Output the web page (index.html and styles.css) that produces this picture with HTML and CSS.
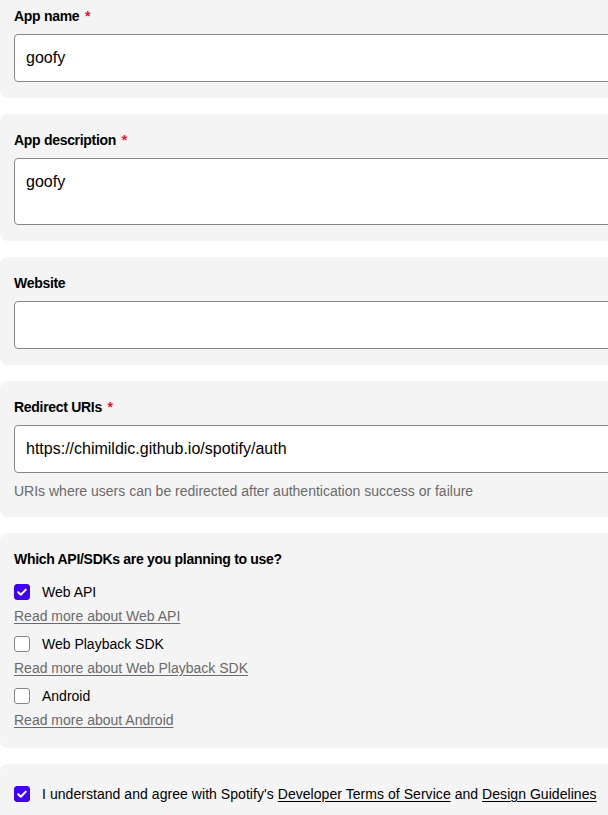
FILE: index.html
```html
<!DOCTYPE html>
<html lang="en">
<head>
<meta charset="utf-8">
<title>Create app</title>
<link rel="stylesheet" href="styles.css">
</head>
<body>
<div class="page">
  <form class="form">
    <div class="card">
      <label class="label">App name <span class="req">*</span></label>
      <div class="input">goofy</div>
    </div>
    <div class="card">
      <label class="label">App description <span class="req">*</span></label>
      <div class="input textarea">goofy</div>
    </div>
    <div class="card">
      <label class="label">Website</label>
      <div class="input"></div>
    </div>
    <div class="card">
      <label class="label">Redirect URIs <span class="req">*</span></label>
      <div class="input">https://chimildic.github.io/spotify/auth</div>
      <p class="help">URIs where users can be redirected after authentication success or failure</p>
    </div>
    <div class="card">
      <label class="label">Which API/SDKs are you planning to use?</label>
      <div class="options">
        <div class="option">
          <div class="check-row">
            <span class="box checked"><svg viewBox="0 0 16 16" width="16" height="16"><polyline points="4.2,8.3 6.8,10.8 11.8,5.6" fill="none" stroke="#fff" stroke-width="2" stroke-linecap="round" stroke-linejoin="round"/></svg></span>
            <span>Web API</span>
          </div>
          <a class="more" href="#">Read more about Web API</a>
        </div>
        <div class="option">
          <div class="check-row">
            <span class="box"></span>
            <span>Web Playback SDK</span>
          </div>
          <a class="more" href="#">Read more about Web Playback SDK</a>
        </div>
        <div class="option">
          <div class="check-row">
            <span class="box"></span>
            <span>Android</span>
          </div>
          <a class="more" href="#">Read more about Android</a>
        </div>
      </div>
    </div>
    <div class="card agree-card">
      <div class="check-row">
        <span class="box checked"><svg viewBox="0 0 16 16" width="16" height="16"><polyline points="4.2,8.3 6.8,10.8 11.8,5.6" fill="none" stroke="#fff" stroke-width="2" stroke-linecap="round" stroke-linejoin="round"/></svg></span>
        <span class="agree-text">I understand and agree with Spotify's <a href="#">Developer Terms of Service</a> and <a href="#">Design Guidelines</a></span>
      </div>
    </div>
  </form>
</div>
</body>
</html>
```

FILE: styles.css
```css
html, body {
  margin: 0;
  padding: 0;
  background: #ffffff;
  overflow: hidden;
}
body {
  font-family: "Liberation Sans", Arial, sans-serif;
  color: #000000;
  font-size: 14px;
}
.page {
  width: 760px;
  margin-top: -10px;
}
.form {
  display: flex;
  flex-direction: column;
  gap: 16px;
}
.card {
  background: #f4f4f4;
  border-radius: 8px;
  padding: 16px 14px;
  display: flex;
  flex-direction: column;
}
.label {
  font-weight: bold;
  font-size: 14px;
  line-height: 20px;
  margin-bottom: 8px;
  letter-spacing: -0.3px;
}
.req {
  color: #e91429;
  margin-left: 2px;
}
.input {
  box-sizing: border-box;
  height: 48px;
  background: #ffffff;
  border: 1px solid #878787;
  border-radius: 4px;
  padding: 0 11px;
  font-size: 16px;
  line-height: 46px;
}
.textarea {
  height: 67px;
  line-height: 20px;
  padding-top: 13px;
}
.help {
  margin: 8px 0 0 0;
  font-size: 14px;
  line-height: 20px;
  color: #6a6a6a;
}
.options {
  display: flex;
  flex-direction: column;
  gap: 4px;
  margin-top: 3px;
}
.option {
  display: flex;
  flex-direction: column;
  align-items: flex-start;
}
.check-row {
  display: flex;
  align-items: center;
  gap: 12px;
  height: 24px;
  font-size: 14px;
}
.box {
  box-sizing: border-box;
  width: 16px;
  height: 16px;
  border: 1px solid #878787;
  border-radius: 3px;
  background: #ffffff;
  flex: none;
  display: flex;
}
.box.checked {
  background: #4100f4;
  border-color: #4100f4;
}
.box.checked svg {
  margin: -1px;
}
.more {
  color: #6a6a6a;
  font-size: 14px;
  line-height: 24px;
  text-decoration: underline;
  text-underline-offset: 2px;
}
.agree-card {
  padding-top: 18px;
}
.agree-text {
  letter-spacing: 0.05px;
}
.agree-text a {
  color: #000000;
  text-decoration: underline;
  text-underline-offset: 2px;
}
```
